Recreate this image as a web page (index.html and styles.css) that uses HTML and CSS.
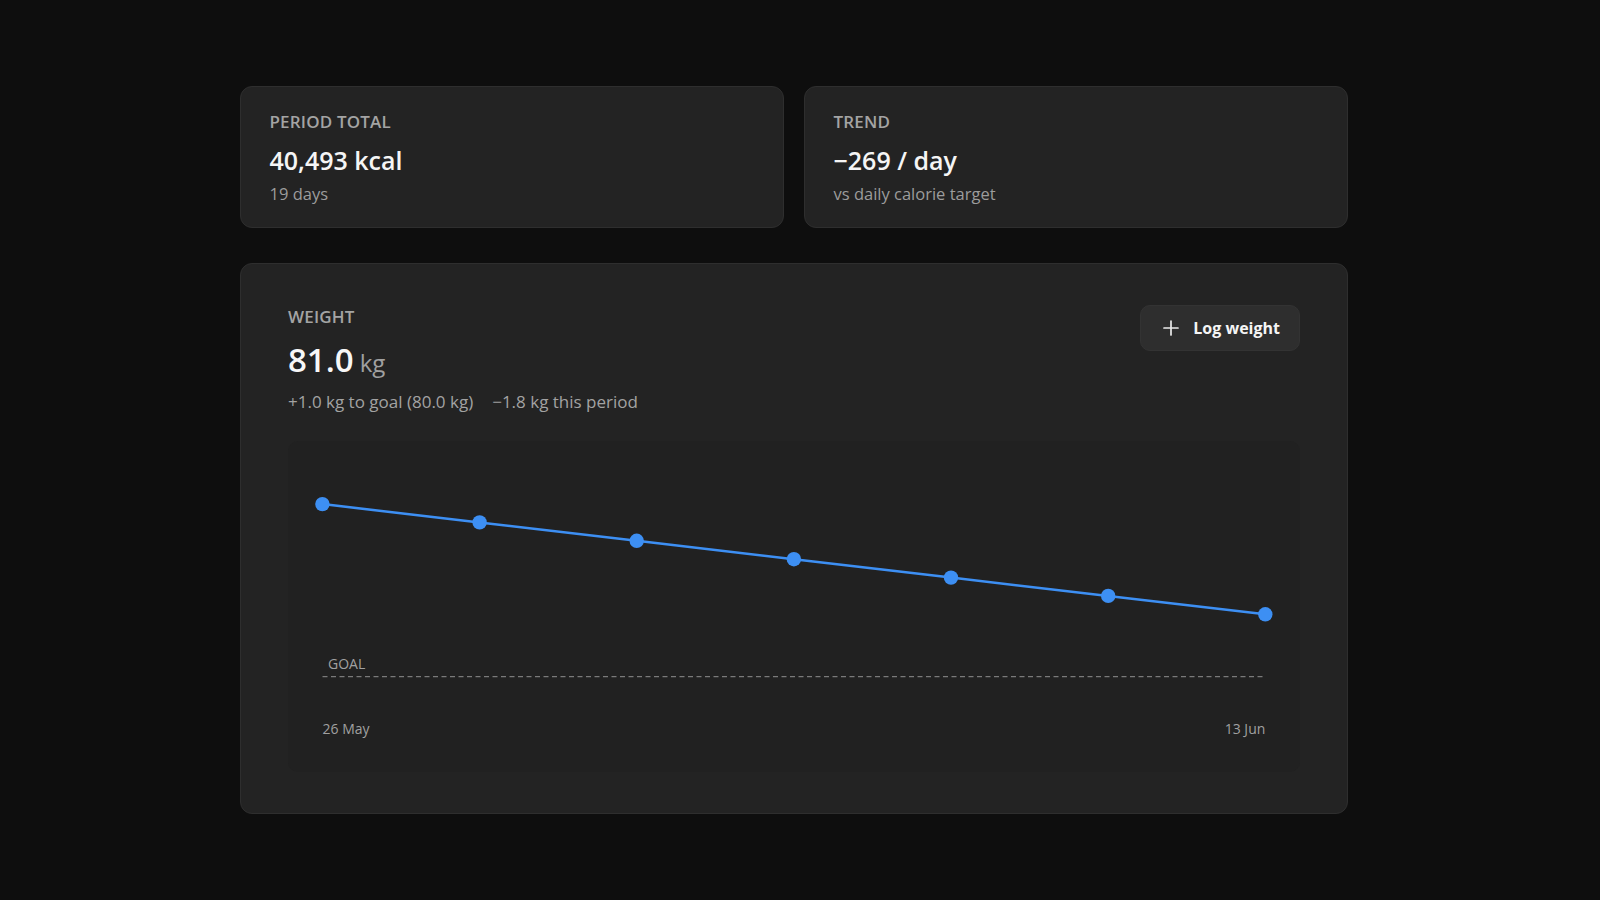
FILE: index.html
```html
<!DOCTYPE html>
<html lang="en">
<head>
<meta charset="utf-8">
<title>Summary</title>
<link rel="stylesheet" href="styles.css">
</head>
<body>
<main class="page">
  <section class="stats">
    <div class="card stat">
      <div class="label">Period total</div>
      <div class="stat-value">40,493 kcal</div>
      <div class="stat-sub">19 days</div>
    </div>
    <div class="card stat">
      <div class="label">Trend</div>
      <div class="stat-value">−269 / day</div>
      <div class="stat-sub">vs daily calorie target</div>
    </div>
  </section>

  <section class="card weight">
    <div class="weight-head">
      <div class="weight-info">
        <div class="label">Weight</div>
        <div class="weight-value">81.0<span class="unit">kg</span></div>
        <div class="weight-sub"><span>+1.0 kg to goal (80.0 kg)</span><span>−1.8 kg this period</span></div>
      </div>
      <button class="log-btn" type="button">
        <svg class="plus" width="16" height="16" viewBox="0 0 16 16" aria-hidden="true"><path d="M8 1v14M1 8h14" stroke="currentColor" stroke-width="1.7" stroke-linecap="round" fill="none"/></svg>
        <span>Log weight</span>
      </button>
    </div>
    <div class="chart">
      <svg class="chart-svg" width="1012" height="331" viewBox="0 0 1012 331">
        <line class="goal-line" x1="34.5" y1="235.7" x2="977.3" y2="235.7"/>
        <text class="goal-text" x="40" y="228.3">GOAL</text>
        <polyline class="trend" points="34.4,63.1 191.6,81.4 348.7,99.8 505.9,118.2 663,136.6 820.2,154.9 977.3,173.3"/>
        <g class="dots">
          <circle cx="34.4" cy="63.1" r="7.2"/>
          <circle cx="191.6" cy="81.4" r="7.2"/>
          <circle cx="348.7" cy="99.8" r="7.2"/>
          <circle cx="505.9" cy="118.2" r="7.2"/>
          <circle cx="663" cy="136.6" r="7.2"/>
          <circle cx="820.2" cy="154.9" r="7.2"/>
          <circle cx="977.3" cy="173.3" r="7.2"/>
        </g>
        <text class="axis-text" x="34.5" y="293.3">26 May</text>
        <text class="axis-text" x="977.3" y="293.3" text-anchor="end">13 Jun</text>
      </svg>
    </div>
  </section>
</main>
</body>
</html>
```

FILE: styles.css
```css
* { box-sizing: border-box; }

html, body {
  margin: 0;
  background: #0e0e0e;
}

body {
  font-family: "Open Sans", "Noto Sans", "Liberation Sans", sans-serif;
  color: #f3f3f3;
}

.page {
  width: 1108px;
  margin-left: 240px;
  padding-top: 86px;
  display: flex;
  flex-direction: column;
  gap: 35px;
}

.stats {
  display: grid;
  grid-template-columns: 1fr 1fr;
  gap: 20px;
}

.card {
  background: #232323;
  border: 1px solid #2e2e2e;
  border-radius: 12px;
}

.stat {
  padding: 23px 28px 22px 28.5px;
}

.label {
  font-size: 17px;
  line-height: 23px;
  font-weight: 600;
  text-transform: uppercase;
  color: #a4a4a4;
  letter-spacing: 0.01em;
}

.stat .label { margin-bottom: 11px; }

.stat-value {
  font-size: 25px;
  line-height: 32.5px;
  font-weight: 600;
  color: #f5f5f5;
  margin-bottom: 5px;
}

.stat-sub {
  font-size: 16.5px;
  line-height: 23px;
  color: #9c9c9c;
}

.weight {
  padding: 41px 47px 41px;
}

.weight-head {
  display: flex;
  justify-content: space-between;
  align-items: flex-start;
}

.weight .label { margin-bottom: 12px; }

.weight-value {
  font-size: 33px;
  line-height: 40px;
  font-weight: 600;
  color: #f7f7f7;
  margin-bottom: 10px;
}

.unit {
  font-size: 24px;
  line-height: 0;
  font-weight: 400;
  color: #a0a0a0;
  margin-left: 6px;
}

.weight-sub {
  display: flex;
  gap: 19px;
  font-size: 17px;
  line-height: 24px;
  color: #a2a2a2;
}

.log-btn {
  display: flex;
  align-items: center;
  gap: 14px;
  height: 46px;
  padding: 0 19px 0 22px;
  border-radius: 10px;
  background: #2e2e2e;
  border: 1px solid #333333;
  color: #f5f5f5;
  font-family: inherit;
  font-size: 16px;
  font-weight: 700;
  cursor: pointer;
}

.plus { display: block; color: #eaeaea; }

.chart {
  margin-top: 27px;
  background: #212121;
  border-radius: 10px;
  height: 331px;
}

.chart-svg { display: block; }

.goal-line {
  stroke: #7a7a7a;
  stroke-width: 1.2;
  stroke-dasharray: 5 3.5;
}

.goal-text {
  font-family: "Open Sans", "Noto Sans", sans-serif;
  font-size: 14px;
  fill: #a0a0a0;
}

.trend {
  fill: none;
  stroke: #3d8ff3;
  stroke-width: 2.5;
  stroke-linejoin: round;
}

.dots circle { fill: #3d8ff3; }

.axis-text {
  font-family: "Open Sans", "Noto Sans", sans-serif;
  font-size: 14px;
  fill: #a0a0a0;
}
```
